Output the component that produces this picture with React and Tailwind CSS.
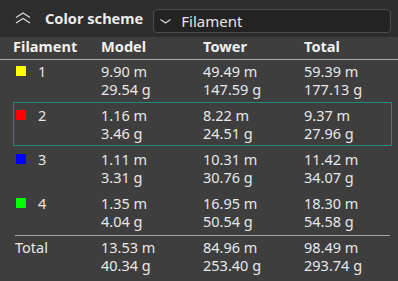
import React from "react";

const rows = [
  { id: 1, color: "bg-[#ffff00]", model: ["9.90 m", "29.54 g"], tower: ["49.49 m", "147.59 g"], total: ["59.39 m", "177.13 g"] },
  { id: 2, color: "bg-[#ff0000]", model: ["1.16 m", "3.46 g"], tower: ["8.22 m", "24.51 g"], total: ["9.37 m", "27.96 g"], active: true },
  { id: 3, color: "bg-[#0000ff]", model: ["1.11 m", "3.31 g"], tower: ["10.31 m", "30.76 g"], total: ["11.42 m", "34.07 g"] },
  { id: 4, color: "bg-[#00ff00]", model: ["1.35 m", "4.04 g"], tower: ["16.95 m", "50.54 g"], total: ["18.30 m", "54.58 g"] },
];

const Cell = ({ lines }) => (
  <div>
    {lines.map((l) => (
      <div key={l} className="h-[18px]">
        {l}
      </div>
    ))}
  </div>
);

const App = () => {
  return (
    <div className="w-[398px] h-[281px] overflow-hidden bg-[#3e3e3e] text-[#e8e8e8] font-['Noto_Sans',sans-serif]">
      {/* header */}
      <div className="h-[37px] bg-[#2d2d2d] flex items-center">
        <svg width="16" height="12" viewBox="0 0 16 12" className="ml-[15px] mb-[2px]" fill="none" stroke="#dcdcdc" strokeWidth="1.2">
          <path d="M1 5.5 L8 1 L15 5.5" />
          <path d="M1 11 L8 6.5 L15 11" />
        </svg>
        <span className="ml-[14px] mb-[2px] text-[14.6px] font-bold leading-[20px] text-[#ececec]">
          Color scheme
        </span>
        <div className="ml-[10px] mr-[7px] mt-[4px] flex-1 h-[24px] rounded-[4px] border border-[#4c4c4c] bg-[#232323] flex items-center">
          <svg width="11" height="5" viewBox="0 0 11 5" className="ml-[6px] mt-[1px]" fill="none" stroke="#dcdcdc" strokeWidth="1.1">
            <path d="M0.5 0.5 L5.5 4 L10.5 0.5" />
          </svg>
          <span className="ml-[10px] text-[15px] leading-[20px] text-[#e6e6e6]">Filament</span>
        </div>
      </div>

      {/* column header */}
      <div className="px-[13px] pb-[3px] leading-[19px] text-[14.6px] font-bold text-[#f0f0f0] grid grid-cols-[88px_102px_101px_1fr] border-b border-[#a9a9a9]">
        <div>Filament</div>
        <div>Model</div>
        <div>Tower</div>
        <div>Total</div>
      </div>

      {/* rows */}
      <div className="-mt-[2px] text-[14.5px] leading-[18px]">
        {rows.map((r) => (
          <div
            key={r.id}
            className={`ml-[13px] mr-[6px] h-[44px] pt-[3px] pl-[2px] border grid grid-cols-[85px_102px_101px_1fr] ${
              r.active ? "border-[#1d8b7a]" : "border-transparent"
            }`}
          >
            <div className="h-[18px] flex items-center">
              <span className={`w-[10px] h-[10px] ${r.color}`} />
              <span className="ml-[12px]">{r.id}</span>
            </div>
            <Cell lines={r.model} />
            <Cell lines={r.tower} />
            <Cell lines={r.total} />
          </div>
        ))}
      </div>

      <div className="ml-[15px] mr-[8px] mt-[1px] h-px bg-[#a4a4a4]" />

      <div className="pl-[15px] pt-[2px] text-[14.5px] leading-[18px] grid grid-cols-[86px_102px_101px_1fr]">
        <div>Total</div>
        <Cell lines={["13.53 m", "40.34 g"]} />
        <Cell lines={["84.96 m", "253.40 g"]} />
        <Cell lines={["98.49 m", "293.74 g"]} />
      </div>
    </div>
  );
};

export default App;
